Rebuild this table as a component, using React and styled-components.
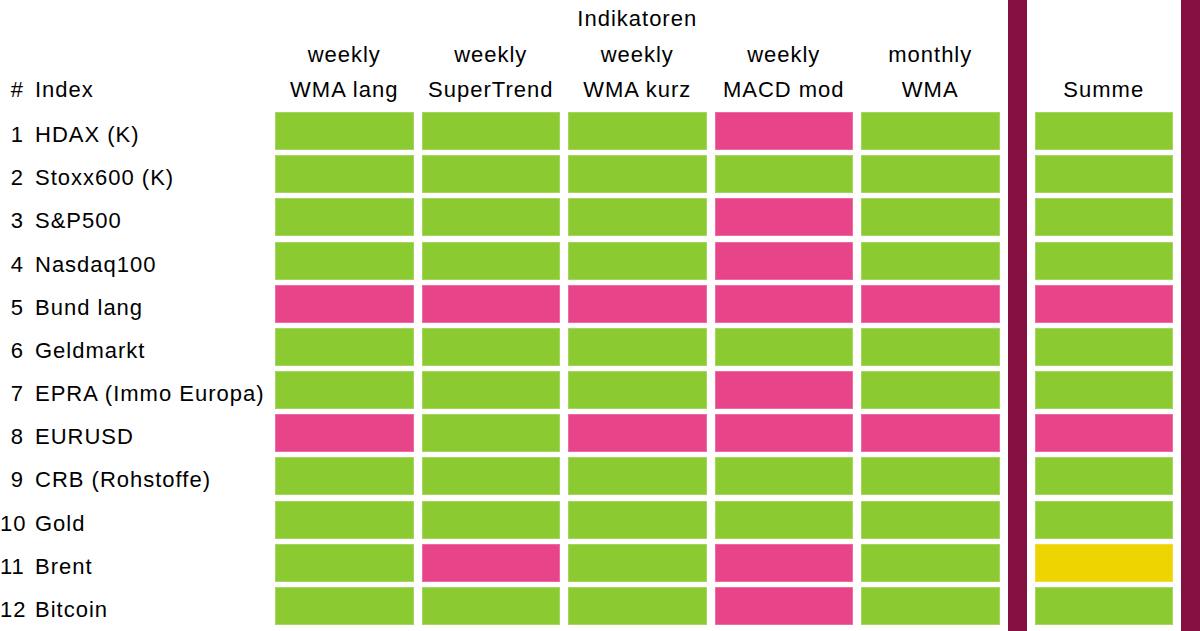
import React from 'react';
import styled, {createGlobalStyle} from 'styled-components';

const colors = {
    green: '#8cca32',
    pink: '#e8448a',
    yellow: '#eed400',
    maroon: '#861040',
    text: '#000000',
};

const indicators = [
    {period: 'weekly', name: 'WMA lang'},
    {period: 'weekly', name: 'SuperTrend'},
    {period: 'weekly', name: 'WMA kurz'},
    {period: 'weekly', name: 'MACD mod'},
    {period: 'monthly', name: 'WMA'},
];

// g = grün, p = rot/pink, y = gelb; letzte Stelle ist die Summe
const rows = [
    ['HDAX (K)', 'gggpg', 'g'],
    ['Stoxx600 (K)', 'ggggg', 'g'],
    ['S&P500', 'gggpg', 'g'],
    ['Nasdaq100', 'gggpg', 'g'],
    ['Bund lang', 'ppppp', 'p'],
    ['Geldmarkt', 'ggggg', 'g'],
    ['EPRA (Immo Europa)', 'gggpg', 'g'],
    ['EURUSD', 'pgppp', 'p'],
    ['CRB (Rohstoffe)', 'ggggg', 'g'],
    ['Gold', 'ggggg', 'g'],
    ['Brent', 'gpgpg', 'y'],
    ['Bitcoin', 'gggpg', 'g'],
];

const toneMap = {g: colors.green, p: colors.pink, y: colors.yellow};

const App = () => {
    return (
        <>
            <GlobalStyle />
            <Board>
                <HeadCell $col="2 / span 5" $row={1}>Indikatoren</HeadCell>
                {indicators.map((ind, i) => (
                    <HeadCell key={'p' + i} $col={i + 2} $row={2}>{ind.period}</HeadCell>
                ))}

                <LabelCell $row={3} $head>
                    <Num>#</Num>
                    <Name>Index</Name>
                </LabelCell>
                {indicators.map((ind, i) => (
                    <HeadCell key={'n' + i} $col={i + 2} $row={3}>{ind.name}</HeadCell>
                ))}
                <HeadCell $col={8} $row={3}>Summe</HeadCell>

                <Bar $col={7} />
                <Bar $col={9} />

                {rows.map(([label, signals, sum], r) => (
                    <React.Fragment key={label}>
                        <LabelCell $row={r + 4}>
                            <Num>{r + 1}</Num>
                            <Name>{label}</Name>
                        </LabelCell>
                        {signals.split('').map((s, c) => (
                            <Cell key={c} $col={c + 2} $row={r + 4} $tone={toneMap[s]} />
                        ))}
                        <Cell $col={8} $row={r + 4} $tone={toneMap[sum]} />
                    </React.Fragment>
                ))}
            </Board>
        </>
    );
};

const GlobalStyle = createGlobalStyle`
    html, body {
        margin: 0;
        padding: 0;
        background: #ffffff;
        overflow: hidden;
    }
    body {
        font-family: "Liberation Sans", Arial, sans-serif;
        color: ${colors.text};
    }
`;

const Board = styled.div`
    width: 1200px;
    height: 631px;
    display: grid;
    grid-template-columns: 267px repeat(5, 138.5px) 19px 138.5px 19px;
    grid-template-rows: 37px 25px 34.4px repeat(12, 38px) 12px;
    column-gap: 8px;
    row-gap: 5.2px;
    font-size: 22px;
    letter-spacing: 1px;
`;

const HeadCell = styled.div`
    grid-column: ${p => p.$col};
    grid-row: ${p => p.$row};
    display: flex;
    align-items: center;
    justify-content: center;
    white-space: nowrap;
    line-height: 25px;
`;

const LabelCell = styled.div`
    grid-column: 1;
    grid-row: ${p => p.$row};
    display: flex;
    align-items: center;
    gap: 11px;
    padding-top: ${p => (p.$head ? '0' : '7px')};
    white-space: nowrap;
    line-height: 25px;
`;

const Num = styled.span`
    width: 24px;
    flex-shrink: 0;
    text-align: right;
`;

const Name = styled.span`
    flex: 1;
`;

const Cell = styled.div`
    grid-column: ${p => p.$col};
    grid-row: ${p => p.$row};
    background: ${p => p.$tone};
    box-shadow: inset 0 0 0 1px rgba(255, 255, 255, 0.22);
`;

const Bar = styled.div`
    grid-column: ${p => p.$col};
    grid-row: 1 / -1;
    background: ${colors.maroon};
`;

export default App;
